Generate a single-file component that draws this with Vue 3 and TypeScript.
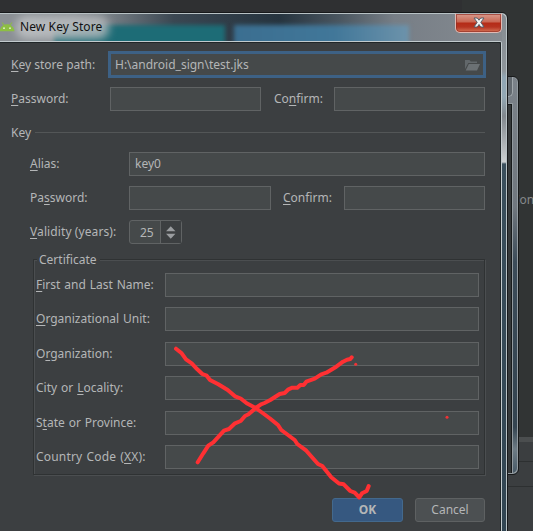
<script setup lang="ts">
import { ref } from 'vue'

interface Field {
  pre: string
  key: string
  post: string
}

const path = ref('H:\\android_sign\\test.jks')
const alias = ref('key0')
const years = ref(25)

const certificate: Field[] = [
  { pre: '', key: 'F', post: 'irst and Last Name:' },
  { pre: '', key: 'O', post: 'rganizational Unit:' },
  { pre: 'O', key: 'r', post: 'ganization:' },
  { pre: 'City or ', key: 'L', post: 'ocality:' },
  { pre: 'S', key: 't', post: 'ate or Province:' },
  { pre: 'Country Code (', key: 'X', post: 'X):' },
]
</script>

<template>
  <div class="desktop">
    <div class="side"><span class="side-text">Con</span></div>
    <div class="side-panel"><i></i><i></i></div>
    <div class="back-window">
      <div class="back-button"></div>
      <div class="back-inner"></div>
    </div>

    <section class="window">
      <header class="titlebar">
        <div class="glass teal"></div>
        <div class="glass blue"></div>
        <div class="glow"></div>
        <svg class="android" width="15" height="10" viewBox="0 0 15 10">
          <path d="M2 .5 4.400 3.500M12 .5 9.600 3.500" stroke="#8cb94c" stroke-width="1.200" />
          <path d="M-.5 9.300C0 5 3.200 2.300 7 2.300s7 2.700 7.500 7Z" fill="#8dbf43" />
          <circle cx="4" cy="6.200" r=".9" fill="#e6f0d3" />
          <circle cx="10" cy="6.200" r=".9" fill="#e6f0d3" />
        </svg>
        <h1>New Key Store</h1>
        <button class="close" aria-label="Close">
          <svg width="12" height="11" viewBox="0 0 12 11">
            <path d="M1 1h3.300L6 3.200 7.700 1H11L7.800 5.300 11 10H7.700L6 7.500 4.300 10H1l3.200-4.700Z" fill="#f3f3f3" stroke="#555e6b" stroke-width="1" />
          </svg>
        </button>
      </header>

      <main class="content">
        <div class="row path-row">
          <label><u>K</u>ey store path:</label>
          <div class="box focused">
            <span>{{ path }}</span>
            <svg width="15" height="12" viewBox="0 0 15 12">
              <path d="M0 10V1h4.500l1.300 1.600H12V4H3.300Z" fill="#62686b" />
              <path d="M3.800 5H15l-3 6.500H.7Z" fill="#6b7174" />
            </svg>
          </div>
        </div>
        <div class="row pass-row">
          <label><u>P</u>assword:</label>
          <div class="box"></div>
          <label class="l-confirm">Co<u>n</u>firm:</label>
          <div class="box"></div>
        </div>
        <div class="separator"><span>Key</span><hr /></div>

        <div class="key-group">
          <div class="row">
            <label><u>A</u>lias:</label>
            <div class="box">{{ alias }}</div>
          </div>
          <div class="row key-pass">
            <label>Pa<u>s</u>sword:</label>
            <div class="box"></div>
            <label class="l-confirm"><u>C</u>onfirm:</label>
            <div class="box"></div>
          </div>
          <div class="row">
            <label class="l-valid"><u>V</u>alidity (years):</label>
            <div class="spinner">
              <span>{{ years }}</span>
              <svg width="21" height="22" viewBox="0 0 21 22">
                <path d="M10 5 14.800 10.300h-9.600ZM10 18 14.800 12.700h-9.600Z" fill="#9a9da0" />
              </svg>
            </div>
          </div>
        </div>

        <fieldset class="certificate">
          <legend>Certificate</legend>
          <div v-for="f in certificate" :key="f.pre + f.key + f.post" class="cert-row">
            <label>{{ f.pre }}<u>{{ f.key }}</u>{{ f.post }}</label>
            <div class="box"></div>
          </div>
        </fieldset>

        <footer class="actions">
          <button class="ok">OK</button>
          <button>Cancel</button>
        </footer>
      </main>
    </section>

    <svg class="ink" width="533" height="531" viewBox="0 0 533 531">
      <path d="M176 348.700 181.700 353.300 186 359.300 191.700 363.300 197.300 369.300 202.300 374 206.700 375.700 210 380 218.300 384.300 227.700 390 235 396.300 240.700 398.500 246.700 403.300 255.700 408 263.300 413.500 270 418.500 278 425 281.300 430 294.700 440 297.300 444 306.300 450.700 318 464 322.300 466 331.300 477.300 339 483.500 343.700 484.300 350.300 491 354.700 492.700 359.300 497.500 362 493.300 366.700 491 368.700 486" />
      <path d="M197.700 462.300 203.300 453.300 208.300 445.700 213.300 442.300 224 430.700 229 429 235 423.300 240.700 421 245 416 248.500 414.300 255.700 408 261 404.300 264.500 403 270.300 400 279.700 394 284.700 393 288.500 389.300 292.300 387.700 297.300 387.700 300.300 385 303.700 385 306.300 381.700 314.700 378.700 321.300 374.300 326.300 372.700 336.300 366.700 343 361.700 347 359.700 350.300 359 351.700 357.300" />
      <circle cx="355.700" cy="364.300" r="1.500" />
      <circle cx="447" cy="417.300" r="1.500" />
    </svg>
  </div>
</template>

<style>
body {
  margin: 0;
  overflow: hidden;
}
</style>

<style scoped>
* {
  box-sizing: border-box;
}
.desktop {
  position: relative;
  width: 533px;
  height: 531px;
  overflow: hidden;
  background: linear-gradient(90deg, #2f3032 462px, #313434 462px);
  color: #b4b6b7;
  font: 12px/16px "Noto Sans", "Open Sans", sans-serif;
}
.side {
  position: absolute;
  left: 507px;
  top: 192px;
  width: 26px;
  overflow: hidden;
  white-space: nowrap;
  color: #85888a;
}
.side-text {
  margin-left: 5px;
}
.side-panel {
  position: absolute;
  left: 507px;
  top: 437px;
  width: 26px;
  height: 94px;
  background: #3b3e40;
  border-top: 5px solid #4b4e4f;
}
.side-panel i {
  display: block;
  height: 20px;
  border-bottom: 1px solid #2d3031;
}
.side-panel i + i {
  height: 25px;
}
.back-window {
  position: absolute;
  left: 480px;
  top: 76px;
  width: 39px;
  height: 399px;
  padding: 0 5px 5px 0;
  border: 1px solid #17191a;
  border-radius: 6px;
  background: linear-gradient(#7b8289 0, #70777e 130px, #3c4c59 185px, #344450 350px, #6e7c85 372px, #475966);
  box-shadow: inset -1px -1px #929a9f, inset 0 1px #929a9f;
}
.back-button {
  height: 20px;
  border: 1px solid #a0a7ab;
  border-top: 0;
  border-radius: 0 0 5px 5px;
  background: #62696f;
}
.back-inner {
  height: 371px;
  margin-top: 6px;
  border: 1px solid #929a9f;
  border-left: 0;
  background: #35393a;
  box-shadow: inset -1px 1px #181b1c;
}
.window {
  position: absolute;
  left: -7px;
  top: 12px;
  width: 515px;
  height: 530px;
  border: 1px solid #17191b;
  border-radius: 6px;
  background: linear-gradient(#858b91 0, #8e969b 58px, #90a6b4 64px, #93a8b4 84px, #80878d 103px, #ccd0d2 149px, #3a4f5c 151px, #314552);
  box-shadow: inset -1px 1px #b8c2c5;
}
.titlebar {
  position: relative;
  display: flex;
  align-items: center;
  width: 508px;
  height: 28px;
  padding-left: 6px;
  overflow: hidden;
  background: linear-gradient(90deg, #8b9095, #8b9095 80px, #737b82 120px, #3b4752 180px, #26343f 285px, #4a5660 345px, #777e86 400px, #858b91);
  box-shadow: inset 0 1px #b8c2c5;
}
.glass {
  position: absolute;
  top: 12px;
  height: 26px;
  filter: blur(2px);
}
.teal {
  left: 60px;
  width: 171px;
  background: #1d6c76;
}
.blue {
  left: 240px;
  width: 175px;
  background: linear-gradient(90deg, #3b6e90, #417799 100px, #6d93ab);
}
.glow {
  position: absolute;
  left: 22px;
  top: 3px;
  width: 93px;
  height: 23px;
  border-radius: 10px;
  background: linear-gradient(90deg, #b9bcbf, #b9bcbfd0);
  filter: blur(4px);
}
.android {
  position: relative;
}
h1 {
  position: relative;
  margin: 0 0 0 5px;
  color: #111;
  font: 12px/16px "Noto Sans", "Open Sans", sans-serif;
  letter-spacing: 0.1px;
}
.close {
  position: absolute;
  left: 461px;
  top: 0;
  display: flex;
  justify-content: center;
  width: 47px;
  height: 20px;
  padding: 3px 0 0;
  border: 1px solid #e1b9b3;
  border-top-color: #aab1b5;
  border-radius: 0 0 5px 5px;
  background: linear-gradient(#d99a8d 0, #c96753 8px, #b52b17 9px, #b63421 13px, #d57457);
  box-shadow: inset 0 0 0 1px #902d22aa;
}
.content {
  width: 508px;
  height: 500px;
  padding: 9px 16px 0 17px;
  border: 1px solid #c2cacd;
  border-left: 0;
  border-radius: 0 2px 0 0;
  background: #3c3f41;
  box-shadow: inset -1px 1px #202628;
}
.row {
  display: flex;
  align-items: center;
  height: 24px;
}
label {
  flex: none;
  width: 99px;
  white-space: nowrap;
}
u {
  text-decoration: underline;
  text-decoration-thickness: 1px;
  text-underline-offset: 2px;
}
.box {
  flex: 1;
  height: 24px;
  padding-left: 5px;
  border: 1px solid #606364;
  background: #45494a;
  line-height: 22px;
}
.path-row {
  height: 27px;
}
.path-row label {
  width: 97px;
}
.path-row .focused {
  display: flex;
  align-items: center;
  justify-content: space-between;
  height: 27px;
  margin-right: -1px;
  padding: 0 3px 0 4px;
  border: 3px solid #3d6185;
}
.pass-row {
  margin-top: 9px;
}
.pass-row .l-confirm {
  width: 60px;
  margin-left: 13px;
}
.separator {
  display: flex;
  align-items: center;
  height: 16px;
  margin-top: 14px;
}
.separator span {
  width: 24px;
}
hr {
  flex: 1;
  margin: -1px 0 0;
  border: 0;
  border-top: 1px solid #535657;
}
.key-group {
  display: grid;
  gap: 10px;
  padding: 11px 0 0 19px;
}
.key-pass .l-confirm {
  width: 61px;
  margin-left: 12px;
}
.key-group .box + .l-confirm + .box {
  flex: none;
  width: 141px;
}
.l-valid {
  letter-spacing: 0.1px;
}
.spinner {
  display: flex;
  width: 53px;
  height: 24px;
  border: 1px solid #606364;
  border-radius: 3px;
  background: #45494a;
}
.spinner span {
  width: 31px;
  padding-left: 10px;
  border-right: 1px solid #606364;
  line-height: 24px;
}
.spinner svg {
  background: #3c3f41;
}
.certificate {
  position: relative;
  display: grid;
  grid-auto-rows: 34.400px;
  height: 216px;
  margin: 15px 0 0 22px;
  padding: 13px 5px 0 2px;
  border: 1px solid #2f3233;
  box-shadow: inset 1px 1px #4b4e50, 1px 1px #4b4e50;
}
legend {
  position: absolute;
  left: 3px;
  top: -8px;
  padding: 0 3px 0 2px;
  background: #3c3f41;
}
.cert-row {
  display: flex;
  height: 24px;
  align-items: center;
  justify-content: space-between;
}
.cert-row label {
  word-spacing: 0.8px;
}
.cert-row:last-child label {
  letter-spacing: 0.18px;
}
.cert-row .box {
  flex: none;
  width: 314px;
}
.actions {
  display: flex;
  justify-content: flex-end;
  gap: 12px;
  margin-top: 23px;
}
.actions button {
  width: 70px;
  height: 24px;
  padding: 0;
  border: 1px solid #5e6162;
  border-radius: 3px;
  background: #4c5052;
  color: #b4b6b7;
  font: inherit;
}
.actions .ok {
  width: 71px;
  border-color: #43698d;
  background: #365880;
  font-weight: 700;
}
.ink {
  position: absolute;
  left: 0;
  top: 0;
  fill: none;
  stroke: #ff3033;
  stroke-width: 4;
  stroke-linecap: round;
  stroke-linejoin: round;
}
.ink circle {
  fill: #f23235;
  stroke: none;
}
</style>
